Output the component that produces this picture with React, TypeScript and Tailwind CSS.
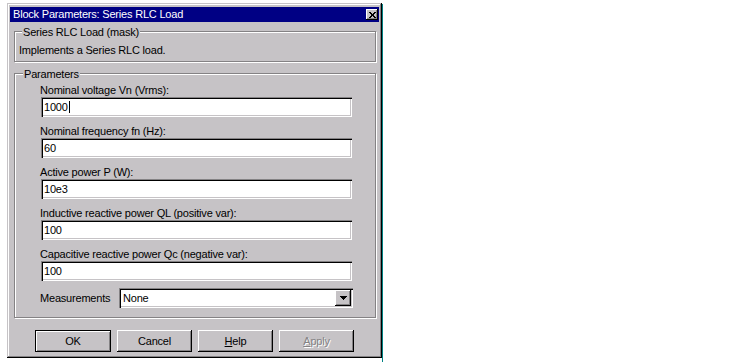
import React from "react";

const sunken =
  "bg-white shadow-[inset_1px_1px_0_#848284,inset_2px_2px_0_#000,inset_-1px_-1px_0_#fff,inset_-2px_-2px_0_#c6c3c6]";
const raised =
  "bg-[#c6c3c6] shadow-[inset_-1px_-1px_0_#000,inset_1px_1px_0_#fff,inset_-2px_-2px_0_#848284,inset_2px_2px_0_#c6c3c6]";
const groupBox =
  "relative border border-[#848284] shadow-[1px_1px_0_#fff,inset_1px_1px_0_#fff]";

function Field({ label, value, caret }: { label: string; value: string; caret?: boolean }) {
  return (
    <div className="flex flex-col">
      <div className="h-[14px] leading-[14px] whitespace-nowrap">{label}</div>
      <div className={"ml-[1px] w-[311px] h-[20px] flex items-center pl-[3px] leading-[13px] " + sunken}>
        <span>{value}</span>
        {caret && <span className="w-px h-[12px] bg-black ml-[1px]" />}
      </div>
    </div>
  );
}

function CloseX() {
  const px = [
    [0, 0], [1, 0], [5, 0], [6, 0],
    [1, 1], [2, 1], [4, 1], [5, 1],
    [2, 2], [3, 2], [4, 2],
    [2, 3], [3, 3], [4, 3],
    [1, 4], [2, 4], [4, 4], [5, 4],
    [0, 5], [1, 5], [5, 5], [6, 5],
  ];
  return (
    <svg width="7" height="6" viewBox="0 0 7 6" shapeRendering="crispEdges">
      {px.map(([x, y], i) => (
        <rect key={i} x={x} y={y} width="1" height="1" fill="#000" />
      ))}
    </svg>
  );
}

function DownArrow() {
  return (
    <svg width="7" height="4" viewBox="0 0 7 4" shapeRendering="crispEdges">
      <rect x="0" y="0" width="7" height="1" fill="#000" />
      <rect x="1" y="1" width="5" height="1" fill="#000" />
      <rect x="2" y="2" width="3" height="1" fill="#000" />
      <rect x="3" y="3" width="1" height="1" fill="#000" />
    </svg>
  );
}

export default function App() {
  return (
    <div className="w-[751px] h-[362px] bg-white overflow-hidden flex items-start font-['Liberation_Sans',Arial,sans-serif] text-[11px] tracking-[-0.2px] text-black">
      <div className="ml-[7px] mt-[3px] w-[375px] h-[355px] bg-[#c6c3c6] shadow-[inset_-1px_-1px_0_#000,inset_1px_1px_0_#c6c3c6,inset_-2px_-2px_0_#848284,inset_2px_2px_0_#fff] pt-[4px] px-[3px] flex flex-col">
        {/* Title bar */}
        <div className="h-[15px] bg-[#000084] flex items-start justify-between">
          <span className="pl-[3px] text-white leading-[15px] whitespace-nowrap">Block Parameters: Series RLC Load</span>
          <div className={"mt-[2px] mr-[1px] w-[12px] h-[11px] flex items-center justify-center " + raised}>
            <CloseX />
          </div>
        </div>

        {/* Group 1 */}
        <div className={"mt-[9px] ml-[4px] w-[362px] h-[31px] " + groupBox}>
          <span className="absolute left-[7px] top-[-6px] px-[1px] bg-[#c6c3c6] leading-[13px] whitespace-nowrap">
            Series RLC Load (mask)
          </span>
          <div className="pt-[12px] pl-[4px] leading-[13px]">Implements a Series RLC load.</div>
        </div>

        {/* Group 2 */}
        <div className={"mt-[11px] ml-[4px] w-[362px] h-[245px] " + groupBox}>
          <span className="absolute left-[8px] top-[-6px] px-[1px] bg-[#c6c3c6] leading-[13px] whitespace-nowrap">
            Parameters
          </span>
          <div className="pt-[9px] pl-[25px] flex flex-col gap-[7px]">
            <Field label="Nominal voltage Vn (Vrms):" value="1000" caret />
            <Field label="Nominal frequency fn (Hz):" value="60" />
            <Field label="Active power P (W):" value="10e3" />
            <Field label="Inductive reactive power QL (positive var):" value="100" />
            <Field label="Capacitive reactive power Qc (negative var):" value="100" />
            <div className="flex items-center h-[20px]">
              <span className="w-[79px] whitespace-nowrap">Measurements</span>
              <div className={"w-[234px] h-[20px] flex items-center pl-[4px] " + sunken}>
                <span>None</span>
                <div className={"ml-auto mr-[2px] w-[16px] h-[16px] flex items-center justify-center " + raised}>
                  <DownArrow />
                </div>
              </div>
            </div>
          </div>
        </div>

        {/* Buttons */}
        <div className="mt-[12px] ml-[25px] flex gap-[6px]">
          <div className="w-[76px] h-[22px] border border-black bg-[#c6c3c6] shadow-[inset_1px_1px_0_#fff,inset_-1px_-1px_0_#848284] flex items-center justify-center">
            OK
          </div>
          <div className={"w-[75px] h-[22px] flex items-center justify-center " + raised}>Cancel</div>
          <div className={"w-[75px] h-[22px] flex items-center justify-center " + raised}>
            <span>
              <span className="underline">H</span>elp
            </span>
          </div>
          <div className={"w-[75px] h-[22px] flex items-center justify-center text-[#848284] [text-shadow:1px_1px_0_#fff] " + raised}>
            <span>
              <span className="underline">A</span>pply
            </span>
          </div>
        </div>
      </div>
      <div className="mt-[4px] w-px h-[358px] bg-[#008284]" />
    </div>
  );
}
